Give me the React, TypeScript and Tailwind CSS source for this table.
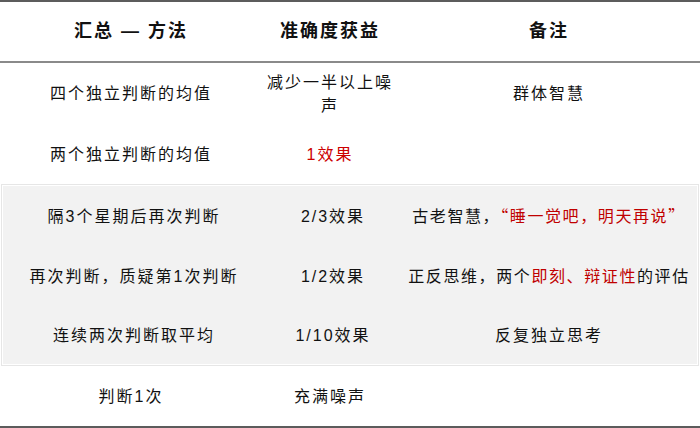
import React from "react";

const font = { fontFamily: '"Liberation Sans", "Noto Sans CJK SC", sans-serif' };
const cjk = { fontFamily: '"Noto Sans CJK SC", sans-serif' };

function Row({ h, c1, c2, c3 }: { h: string; c1: React.ReactNode; c2: React.ReactNode; c3: React.ReactNode }) {
  return (
    <div className={`flex ${h} items-center text-[16px] tracking-[2px] text-[#111] leading-[23px]`}>
      <div className="w-[262px] text-center">{c1}</div>
      <div className="w-[136px] text-center">{c2}</div>
      <div className="flex-1 text-center whitespace-nowrap">{c3}</div>
    </div>
  );
}

export default function App() {
  return (
    <div className="w-[700px] h-[428px] bg-white flex flex-col" style={font}>
      <div className="h-[2px] bg-[#5c5c5c]" />
      <div className="flex h-[59px] items-center text-[18px] font-bold tracking-[2px] text-[#111]">
        <div className="w-[262px] text-center">汇总 — 方法</div>
        <div className="w-[136px] text-center">准确度获益</div>
        <div className="flex-1 text-center">备注</div>
      </div>
      <div className="h-[2px] bg-[#8a8a8a]" />
      <Row
        h="h-[62px]"
        c1="四个独立判断的均值"
        c2={<span>减少一半以上噪<br />声</span>}
        c3="群体智慧"
      />
      <Row h="h-[60px]" c1="两个独立判断的均值" c2={<span className="text-[#cc0000]">1效果</span>} c3="" />
      <div className="mx-[1px] border border-[#e6e6e6] p-px bg-white">
        <div className="bg-[#f2f2f2] flex flex-col">
          <Row
            h="h-[60px]"
            c1="隔3个星期后再次判断"
            c2="2/3效果"
            c3={
              <span className="tracking-[1.6px]">
                古老智慧，
                <span className="text-[#c00000]" style={cjk}>
                  “睡一觉吧，明天再说”
                </span>
              </span>
            }
          />
          <Row
            h="h-[60px]"
            c1="再次判断，质疑第1次判断"
            c2="1/2效果"
            c3={
              <span className="tracking-[1.6px]">
                正反思维，两个<span className="text-[#c00000]">即刻、辩证性</span>的评估
              </span>
            }
          />
          <Row h="h-[58px]" c1="连续两次判断取平均" c2="1/10效果" c3="反复独立思考" />
        </div>
      </div>
      <Row h="h-[60px]" c1="判断1次" c2="充满噪声" c3="" />
      <div className="flex-1" />
      <div className="h-[2px] bg-[#5c5c5c]" />
    </div>
  );
}
